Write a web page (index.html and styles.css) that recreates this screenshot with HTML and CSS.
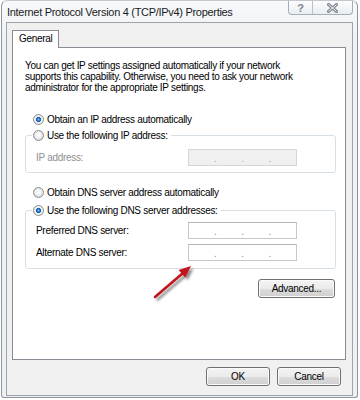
FILE: index.html
```html
<!DOCTYPE html>
<html lang="en">
<head>
<meta charset="utf-8">
<title>Internet Protocol Version 4 (TCP/IPv4) Properties</title>
<link rel="stylesheet" href="styles.css">
</head>
<body>
<div class="window">
  <div class="titlebar">
    <span class="title">Internet Protocol Version 4 (TCP/IPv4) Properties</span>
    <div class="caption">
      <div class="cbtn help">?</div>
      <div class="cbtn close">
        <svg width="11" height="10" viewBox="0 0 11 10"><path d="M1.5 1.5 L9.5 8.5 M9.5 1.5 L1.5 8.5" stroke="#7f8891" stroke-width="3" stroke-linecap="square" fill="none"/><path d="M1.5 1.5 L9.5 8.5 M9.5 1.5 L1.5 8.5" stroke="#f4f6f8" stroke-width="1" fill="none"/></svg>
      </div>
    </div>
  </div>
  <div class="client">
    <div class="tabs"><div class="tab">General</div></div>
    <div class="panel">
      <p class="intro">You can get IP settings assigned automatically if your network<br>supports this capability. Otherwise, you need to ask your network<br>administrator for the appropriate IP settings.</p>

      <div class="radio-row first"><span class="radio checked"></span><span>Obtain an IP address automatically</span></div>
      <fieldset class="group g1">
        <legend><span class="legend-row"><span class="radio"></span><span>Use the following IP address:</span></span></legend>
        <div class="field-row disabled"><span class="lbl">IP address:</span><div class="ipbox off"><i>.</i><i>.</i><i>.</i></div></div>
      </fieldset>

      <div class="radio-row dns"><span class="radio"></span><span>Obtain DNS server address automatically</span></div>
      <fieldset class="group g2">
        <legend><span class="legend-row"><span class="radio checked"></span><span>Use the following DNS server addresses:</span></span></legend>
        <div class="field-row"><span class="lbl">Preferred DNS server:</span><div class="ipbox"><i>.</i><i>.</i><i>.</i></div></div>
        <div class="field-row"><span class="lbl">Alternate DNS server:</span><div class="ipbox"><i>.</i><i>.</i><i>.</i></div></div>
      </fieldset>

      <div class="adv-row"><button class="btn adv">Advanced...</button></div>
    </div>
    <div class="footer">
      <button class="btn">OK</button>
      <button class="btn">Cancel</button>
    </div>
  </div>
</div>
<svg class="arrow" width="52" height="46" viewBox="0 0 52 46">
  <defs>
    <filter id="sh" x="-30%" y="-30%" width="160%" height="160%">
      <feDropShadow dx="2.5" dy="2.5" stdDeviation="1.3" flood-color="#000" flood-opacity="0.45"/>
    </filter>
  </defs>
  <g filter="url(#sh)">
    <path d="M7 37 L35 13" stroke="#c0141b" stroke-width="2.6" stroke-linecap="round"/>
    <path d="M43 6 L37.2 17.6 L30.6 10 Z" fill="#c0141b"/>
  </g>
</svg>
</body>
</html>
```
FILE: styles.css
```css
* { box-sizing: border-box; }
html, body { margin: 0; padding: 0; background: #ffffff; }
body {
  width: 360px;
  height: 400px;
  overflow: hidden;
  position: relative;
  font-family: "Liberation Sans", Arial, sans-serif;
  font-size: 10px;
  letter-spacing: -0.3px;
  color: #000;
}

.window {
  margin-left: 1px;
  width: 357px;
  height: 398px;
  border: 1px solid #8e949a;
  border-top-color: #c3c8ce;
  border-radius: 6px 6px 3px 3px;
  background: linear-gradient(#f7f9fb, #eef2f6 40px, #eef1f4);
  padding: 0 4px 1px 4px;
  display: flex;
  flex-direction: column;
}

.titlebar {
  height: 21px;
  display: flex;
  justify-content: space-between;
  align-items: flex-start;
}
.title {
  padding: 2px 0 0 1px;
  line-height: 19px;
  font-size: 11px;
  letter-spacing: -0.3px;
  color: #1a1a1a;
  white-space: nowrap;
}
.caption {
  display: flex;
  height: 14px;
  border: 1px solid #a6adb5;
  border-top: none;
  border-radius: 0 0 4px 4px;
  background: linear-gradient(#fdfdfe, #e9edf1);
  overflow: hidden;
}
.cbtn {
  display: flex;
  align-items: center;
  justify-content: center;
  height: 13px;
}
.help {
  width: 24px;
  border-right: 1px solid #b9c0c7;
  font-size: 11px;
  font-weight: bold;
  color: #7c858e;
  letter-spacing: 0;
}
.close { width: 39px; }

.client {
  flex: 1;
  display: flex;
  flex-direction: column;
  border: 1px solid #9da3a9;
  background: #f0f0f0;
  padding: 7px 6px 0 5px;
}

.tabs { height: 17px; display: flex; }
.tab {
  height: 18px;
  padding: 0 6px;
  line-height: 16px;
  border: 1px solid #898c95;
  border-bottom: none;
  background: #fff;
  position: relative;
  z-index: 1;
}

.panel {
  flex: 1;
  border: 1px solid #898c95;
  background: #fff;
  padding: 12px 9px 0 12px;
}

.intro {
  margin: 0;
  line-height: 11px;
  white-space: nowrap;
}

.radio-row {
  display: flex;
  align-items: center;
  gap: 3px;
  height: 13px;
  padding-left: 8px;
  white-space: nowrap;
}
.radio-row.first { margin-top: 20px; }
.radio-row.dns { margin-top: 13px; }

.radio {
  flex: none;
  width: 11px;
  height: 11px;
  border-radius: 50%;
  border: 1px solid #8c8f92;
  background: radial-gradient(circle at 50% 45%, #ffffff 0, #f2f2f2 2.5px, #d9dadb 5px);
}
.radio.checked {
  background: radial-gradient(circle at 50% 50%, #7cc1f2 0, #2f7ccd 1.3px, #1b5aa6 2.4px, #e9ebed 2.9px, #f7f7f7 3.6px, #d6d8da 5px);
}

.group {
  margin: 0;
  width: 311px;
  border: 1px solid #d5dfe5;
  border-radius: 3px;
  padding: 7px 10px 6px 10px;
}
.g1 { margin-top: 3px; }
.g2 { margin-top: 5px; padding-top: 5px; padding-bottom: 7px; display: flex; flex-direction: column; gap: 5px; }

legend {
  padding: 0 3px 0 1px;
  margin-left: -4px;
  height: 13px;
}
.legend-row {
  display: flex;
  align-items: center;
  gap: 3px;
  height: 13px;
  white-space: nowrap;
}

.field-row {
  display: grid;
  grid-template-columns: 152px 109px;
  align-items: center;
  height: 17px;
}
.field-row.disabled .lbl { color: #8f8f8f; }

.ipbox {
  height: 17px;
  border: 1px solid #c5c8cc;
  border-top-color: #b3b6ba;
  background: #fff;
  display: flex;
  justify-content: space-evenly;
  align-items: center;
}
.ipbox i {
  font-style: normal;
  color: #8a8a8a;
  line-height: 15px;
  padding-top: 1px;
}
.ipbox.off {
  background: #f0f0f0;
  border-color: #d6d6d6;
}
.ipbox.off i { color: #a8a8a8; }

.adv-row {
  width: 311px;
  margin-top: 10px;
  display: flex;
  justify-content: flex-end;
  padding-right: 1px;
}

.btn {
  height: 19px;
  width: 64px;
  padding: 0;
  font-family: "Liberation Sans", Arial, sans-serif;
  font-size: 10px;
  letter-spacing: -0.3px;
  color: #000;
  border: 1px solid #707070;
  border-radius: 3px;
  background: linear-gradient(#f3f3f3 0%, #ebebeb 50%, #dddddd 51%, #cfcfcf 100%);
  box-shadow: inset 0 0 0 1px #fbfbfb;
}
.btn.adv { width: 77px; }

.footer {
  height: 35px;
  display: flex;
  justify-content: flex-end;
  gap: 7px;
  padding: 7px 5px 0 0;
}

.arrow {
  position: absolute;
  left: 148px;
  top: 260px;
}
```
